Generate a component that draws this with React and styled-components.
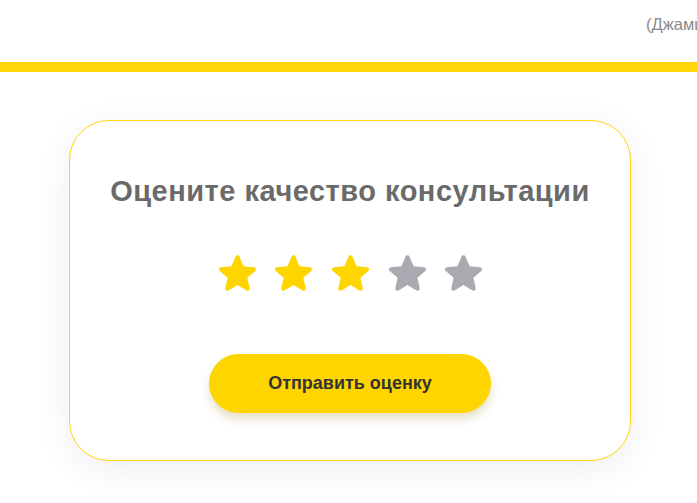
import React, { useState } from "react";
import styled, { createGlobalStyle } from "styled-components";

const Global = createGlobalStyle`
  html, body { margin: 0; padding: 0; background: #ffffff; }
  body { font-family: "Liberation Sans", Arial, sans-serif; overflow: hidden; }
  * { box-sizing: border-box; }
`;

const Page = styled.div`
  width: 697px;
  height: 503px;
  display: flex;
  flex-direction: column;
  overflow: hidden;
`;

const Header = styled.header`
  height: 62px;
  display: flex;
  justify-content: flex-start;
  padding: 14px 0 0 646px;
  overflow: hidden;
  white-space: nowrap;
`;

const UserName = styled.span`
  font-size: 16.5px;
  color: #8a8a8a;
  line-height: 20px;
`;

const Bar = styled.div`
  height: 10px;
  background: #ffd60a;
  flex-shrink: 0;
`;

const Main = styled.main`
  display: flex;
  justify-content: center;
  padding: 48px 0 0 3px;
`;

const Card = styled.section`
  width: 562px;
  height: 341px;
  border: 1px solid #ffd60a;
  border-radius: 40px;
  background: #fff;
  box-shadow: 0 8px 36px rgba(0, 0, 0, 0.07);
  display: flex;
  flex-direction: column;
  align-items: center;
  padding-top: 54px;
`;

const Title = styled.h2`
  margin: 0;
  font-size: 29px;
  line-height: 33px;
  letter-spacing: 0.5px;
  font-weight: 700;
  color: #6a6a6a;
`;

const Stars = styled.div`
  display: flex;
  gap: 17.7px;
  margin-top: 45px;
  margin-left: 1px;
`;

const StarButton = styled.button`
  border: 0;
  padding: 0;
  background: none;
  width: 39px;
  height: 39px;
  cursor: pointer;
  color: ${(p) => (p.$active ? "#ffd500" : "#a9a9b1")};
  svg { display: block; width: 39px; height: 39px; }
`;

const Submit = styled.button`
  margin-top: 62px;
  width: 282px;
  height: 59px;
  border: 0;
  border-radius: 30px;
  background: #ffd500;
  box-shadow: 0 6px 10px rgba(140, 120, 0, 0.22);
  font-family: "Liberation Sans", Arial, sans-serif;
  font-weight: 700;
  font-size: 18px;
  color: #333333;
  cursor: pointer;
`;

const Star = () => (
  <svg viewBox="3 2.5 18 18" fill="currentColor">
    <path d="M12 17.27l4.15 2.51c.76.46 1.690-.22 1.49-1.08l-1.1-4.72 3.67-3.18c.67-.58.31-1.68-.57-1.75l-4.83-.41-1.89-4.46c-.34-.81-1.5-.81-1.84 0L9.19 8.63l-4.83.41c-.88.07-1.24 1.17-.57 1.75l3.67 3.18-1.1 4.72c-.2.86.73 1.54 1.49 1.08l4.15-2.5z" />
  </svg>
);

export default function App() {
  const [rating, setRating] = useState(3);
  return (
    <>
      <Global />
      <Page>
        <Header>
          <UserName>(Джамшид)</UserName>
        </Header>
        <Bar />
        <Main>
          <Card>
            <Title>Оцените качество консультации</Title>
            <Stars>
              {[1, 2, 3, 4, 5].map((n) => (
                <StarButton key={n} $active={n <= rating} onClick={() => setRating(n)} aria-label={`${n}`}>
                  <Star />
                </StarButton>
              ))}
            </Stars>
            <Submit>Отправить оценку</Submit>
          </Card>
        </Main>
      </Page>
    </>
  );
}
